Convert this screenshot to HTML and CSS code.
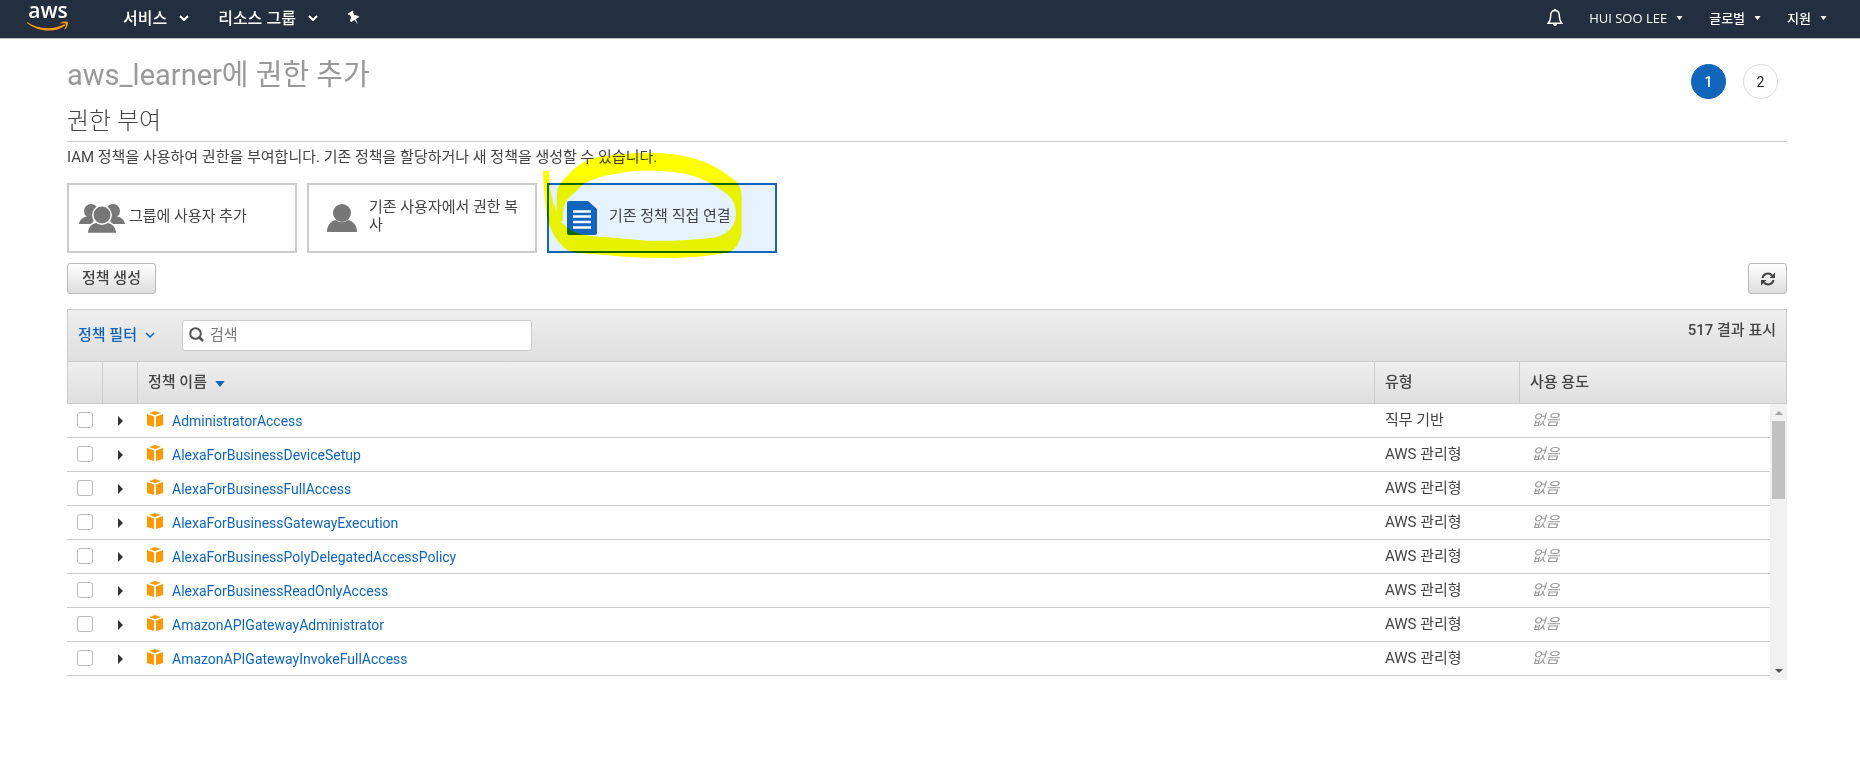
FILE: index.html
```html
<!DOCTYPE html>
<html lang="ko">
<head>
    <meta charset="UTF-8">
    <meta name="viewport" content="width=device-width, initial-scale=1.0">
    <title>IAM Management Console</title>
    <link rel="stylesheet" href="styles.css">
</head>
<body>

<!-- Shared icons -->
<svg class="sprite" aria-hidden="true">
    <symbol id="icon-chevron" viewBox="0 0 10 6">
        <path d="M1 1 L5 5 L9 1" fill="none" stroke="currentColor" stroke-width="2"/>
    </symbol>
    <symbol id="icon-caret" viewBox="0 0 8 5">
        <path d="M0 0 H8 L4 5 Z" fill="currentColor"/>
    </symbol>
    <symbol id="icon-expand" viewBox="0 0 5 10">
        <path d="M0 0 L5 5 L0 10 Z" fill="currentColor"/>
    </symbol>
    <symbol id="icon-policy" viewBox="0 0 16 16">
        <path d="M8 0 L14 2 L8 4 L2 2 Z M0 3 L7 5.4 V16 L0 14 Z M16 3 L9 5.4 V16 L16 14 Z" fill="#f90"/>
    </symbol>
</svg>

<nav class="navbar">
    <a href="#" class="logo" aria-label="AWS">
        <svg width="42" height="38" viewBox="0 0 42 38">
            <text x="21" y="18" text-anchor="middle" class="logo-text">aws</text>
            <path d="M0 22 C11 29.500 26 30 37 24.500 C38 24 38.800 25 37.800 25.700 C28 33 11 32 0 23 Z" fill="#f90"/>
            <path d="M33.500 23 C36 21.200 40 21.400 40.800 22.200 C41.400 23.500 40.300 27.500 38 29.500 C37.500 29.700 37.400 29.300 37.600 28.900 C38.300 27.300 39.300 24.700 38.800 23.900 C38 23.100 35.500 23.300 33.900 23.600 C33.300 23.600 33.200 23.200 33.500 23 Z" fill="#f90"/>
        </svg>
    </a>
    <div class="nav-left">
        <button type="button">서비스 <svg width="10" height="6"><use href="#icon-chevron"/></svg></button>
        <button type="button">리소스 그룹 <svg width="10" height="6"><use href="#icon-chevron"/></svg></button>
        <button type="button" aria-label="고정">
            <svg width="14" height="16" viewBox="0 0 14 16">
                <path transform="rotate(-32 7 8)" d="M4 1 H10 V2.500 H9 V6 Q12 7.200 12 10 H7.800 L7 15.500 L6.200 10 H2 Q2 7.200 5 6 V2.500 H4 Z" fill="#fff"/>
            </svg>
        </button>
    </div>
    <div class="nav-right">
        <button type="button" class="bell" aria-label="알림">
            <svg width="16" height="18" viewBox="0 0 16 18">
                <path d="M8 1.500 C5 1.500 3.700 4 3.700 6.500 C3.700 11 2.500 12.800 1 14.300 H15 C13.500 12.800 12.300 11 12.300 6.500 C12.300 4 11 1.500 8 1.500 Z" fill="none" stroke="#fff" stroke-width="1.400"/>
                <path d="M7 0 H9 V2 H7 Z M6 15 H10 C10 17.600 6 17.600 6 15 Z" fill="#fff"/>
            </svg>
        </button>
        <button type="button">HUI SOO LEE <svg width="7" height="4" viewBox="0 0 8 5"><use href="#icon-caret"/></svg></button>
        <button type="button">글로벌 <svg width="7" height="4" viewBox="0 0 8 5"><use href="#icon-caret"/></svg></button>
        <button type="button">지원 <svg width="7" height="4" viewBox="0 0 8 5"><use href="#icon-caret"/></svg></button>
    </div>
</nav>

<main class="content">
    <header class="page-header">
        <h1>aws_learner에 권한 추가</h1>
        <ol class="steps">
            <li class="active">1</li>
            <li>2</li>
        </ol>
    </header>

    <h2>권한 부여</h2>
    <p class="description">IAM 정책을 사용하여 권한을 부여합니다. 기존 정책을 할당하거나 새 정책을 생성할 수 있습니다.</p>

    <div class="cards">
        <button type="button" class="card">
            <span class="card-icon">
                <svg width="46" height="30" viewBox="0 0 46 30">
                    <g fill="#777">
                        <circle cx="12" cy="8" r="7"/>
                        <circle cx="34" cy="8" r="7"/>
                        <path d="M0 21 C0.500 17 4 14 8 13.500 H15 L14 21 Z M46 21 C45.500 17 42 14 38 13.500 H31 L32 21 Z"/>
                    </g>
                    <g fill="#777" stroke="#fff" stroke-width="1.500">
                        <path d="M8 30.500 C8.500 24 12.500 20 17.500 19 H28.500 C33.500 20 37.500 24 38 30.500 Z"/>
                        <circle cx="23" cy="12" r="9.200"/>
                    </g>
                </svg>
            </span>
            <span class="card-text">그룹에 사용자 추가</span>
        </button>
        <button type="button" class="card">
            <span class="card-icon">
                <svg width="30" height="28" viewBox="0 0 30 28">
                    <g fill="#777">
                        <path d="M0 28 C0 21 4 17 9 16 C12.500 19 17.500 19 21 16 C26 17 30 21 30 28 Z"/>
                        <circle cx="15" cy="9" r="9"/>
                    </g>
                </svg>
            </span>
            <span class="card-text">기존 사용자에서 권한 복사</span>
        </button>
        <button type="button" class="card selected" aria-pressed="true">
            <span class="card-icon">
                <svg width="30" height="34" viewBox="0 0 30 34">
                    <path d="M2 0 H21 L30 8 V32 Q30 34 28 34 H2 Q0 34 0 32 V2 Q0 0 2 0 Z" fill="#1166bb"/>
                    <path d="M6 10.500 H24 M6 15.500 H24 M6 21 H24 M6 26.500 H24" stroke="#fff" stroke-width="2.500"/>
                </svg>
            </span>
            <span class="card-text">기존 정책 직접 연결</span>
            <svg class="marker" width="206" height="110" viewBox="300 60 618 330" aria-hidden="true">
                <path fill="#ff0" fill-rule="evenodd" d="M309 123 H327 Q328 200 350 246 Q350 200 352 178 Q364 152 385 134 Q420 95 470 82 Q540 68 640 68 Q700 69 760 85 Q820 102 870 140 Q905 160 905 200 V310 Q898 350 870 366 Q800 382 700 384 Q560 384 470 373 Q410 370 385 362 Q350 340 330 290 Q312 235 309 123 Z M360 273 Q372 283 385 295 Q400 312 460 319 Q540 324 620 332 Q730 334 820 323 Q862 315 880 285 Q888 265 888 250 Q886 215 865 196 Q790 134 700 126 Q600 114 520 133 Q460 143 430 163 L383 207 Q366 228 369 276 Z"/>
            </svg>
        </button>
    </div>

    <div class="actions">
        <button type="button" class="btn">정책 생성</button>
        <button type="button" class="btn btn-icon" aria-label="새로 고침">
            <svg width="14" height="14" viewBox="0 0 14 14">
                <path d="M1.500 6 C2.200 1.500 8 0 11 3.500 M12.500 8 C11.800 12.500 6 14 3 10.500" fill="none" stroke="#444" stroke-width="2"/>
                <path d="M14 0.500 V6 H8.500 Z M0 13.500 V8 H5.500 Z" fill="#444"/>
            </svg>
        </button>
    </div>

    <section class="policies">
        <div class="toolbar">
            <button type="button" class="filter">정책 필터 <svg width="10" height="6" viewBox="0 0 10 6"><path d="M1 1 L5 5 L9 1" fill="none" stroke="currentColor" stroke-width="1.500"/></svg></button>
            <label class="search">
                <svg width="15" height="15" viewBox="0 0 15 15">
                    <path d="M10 10 L14 14" stroke="#555" stroke-width="2.500"/>
                    <circle cx="6.500" cy="6.500" r="5.300" fill="none" stroke="#555" stroke-width="2"/>
                </svg>
                <input type="text" placeholder="검색" aria-label="검색">
            </label>
            <span class="count">517 결과 표시</span>
        </div>

        <table class="table-head">
            <thead>
                <tr>
                    <th class="col-check"></th>
                    <th class="col-expand"></th>
                    <th>정책 이름 <svg width="10" height="6" viewBox="0 0 8 5"><use href="#icon-caret"/></svg></th>
                    <th class="col-type">유형</th>
                    <th class="col-usage">사용 용도</th>
                </tr>
            </thead>
        </table>

        <div class="table-scroll">
            <table class="table-body">
                <tbody>
                    <tr>
                        <td class="col-check"><input type="checkbox" aria-label="AdministratorAccess"></td>
                        <td class="col-expand"><svg width="5" height="10"><use href="#icon-expand"/></svg></td>
                        <td class="name"><svg width="16" height="16"><use href="#icon-policy"/></svg><a href="#">AdministratorAccess</a></td>
                        <td class="col-type">직무 기반</td>
                        <td class="col-usage">없음</td>
                    </tr>
                    <tr>
                        <td class="col-check"><input type="checkbox" aria-label="AlexaForBusinessDeviceSetup"></td>
                        <td class="col-expand"><svg width="5" height="10"><use href="#icon-expand"/></svg></td>
                        <td class="name"><svg width="16" height="16"><use href="#icon-policy"/></svg><a href="#">AlexaForBusinessDeviceSetup</a></td>
                        <td class="col-type">AWS 관리형</td>
                        <td class="col-usage">없음</td>
                    </tr>
                    <tr>
                        <td class="col-check"><input type="checkbox" aria-label="AlexaForBusinessFullAccess"></td>
                        <td class="col-expand"><svg width="5" height="10"><use href="#icon-expand"/></svg></td>
                        <td class="name"><svg width="16" height="16"><use href="#icon-policy"/></svg><a href="#">AlexaForBusinessFullAccess</a></td>
                        <td class="col-type">AWS 관리형</td>
                        <td class="col-usage">없음</td>
                    </tr>
                    <tr>
                        <td class="col-check"><input type="checkbox" aria-label="AlexaForBusinessGatewayExecution"></td>
                        <td class="col-expand"><svg width="5" height="10"><use href="#icon-expand"/></svg></td>
                        <td class="name"><svg width="16" height="16"><use href="#icon-policy"/></svg><a href="#">AlexaForBusinessGatewayExecution</a></td>
                        <td class="col-type">AWS 관리형</td>
                        <td class="col-usage">없음</td>
                    </tr>
                    <tr>
                        <td class="col-check"><input type="checkbox" aria-label="AlexaForBusinessPolyDelegatedAccessPolicy"></td>
                        <td class="col-expand"><svg width="5" height="10"><use href="#icon-expand"/></svg></td>
                        <td class="name"><svg width="16" height="16"><use href="#icon-policy"/></svg><a href="#">AlexaForBusinessPolyDelegatedAccessPolicy</a></td>
                        <td class="col-type">AWS 관리형</td>
                        <td class="col-usage">없음</td>
                    </tr>
                    <tr>
                        <td class="col-check"><input type="checkbox" aria-label="AlexaForBusinessReadOnlyAccess"></td>
                        <td class="col-expand"><svg width="5" height="10"><use href="#icon-expand"/></svg></td>
                        <td class="name"><svg width="16" height="16"><use href="#icon-policy"/></svg><a href="#">AlexaForBusinessReadOnlyAccess</a></td>
                        <td class="col-type">AWS 관리형</td>
                        <td class="col-usage">없음</td>
                    </tr>
                    <tr>
                        <td class="col-check"><input type="checkbox" aria-label="AmazonAPIGatewayAdministrator"></td>
                        <td class="col-expand"><svg width="5" height="10"><use href="#icon-expand"/></svg></td>
                        <td class="name"><svg width="16" height="16"><use href="#icon-policy"/></svg><a href="#">AmazonAPIGatewayAdministrator</a></td>
                        <td class="col-type">AWS 관리형</td>
                        <td class="col-usage">없음</td>
                    </tr>
                    <tr>
                        <td class="col-check"><input type="checkbox" aria-label="AmazonAPIGatewayInvokeFullAccess"></td>
                        <td class="col-expand"><svg width="5" height="10"><use href="#icon-expand"/></svg></td>
                        <td class="name"><svg width="16" height="16"><use href="#icon-policy"/></svg><a href="#">AmazonAPIGatewayInvokeFullAccess</a></td>
                        <td class="col-type">AWS 관리형</td>
                        <td class="col-usage">없음</td>
                    </tr>
                </tbody>
            </table>
            <div class="scrollbar" aria-hidden="true">
                <svg class="arrow-up" width="8" height="4" viewBox="0 0 8 4"><path d="M0 4 L4 0 L8 4 Z" fill="#a3a3a3"/></svg>
                <div class="thumb"></div>
                <svg class="arrow-down" width="8" height="4" viewBox="0 0 8 4"><path d="M0 0 L4 4 L8 0 Z" fill="#505050"/></svg>
            </div>
        </div>
    </section>
</main>

</body>
</html>
```
FILE: styles.css
```css
* {
    box-sizing: border-box;
}
body {
    margin: 0;
    font-family: Roboto, "Noto Sans CJK KR", sans-serif;
    font-size: 15px;
    line-height: 18px;
    color: #444;
    background: #fff;
}
button {
    font: inherit;
    color: inherit;
    cursor: pointer;
}
a {
    color: #1166bb;
    text-decoration: none;
}
a:hover {
    text-decoration: underline;
}
.sprite {
    display: none;
}

/* Navigation */
.navbar {
    display: flex;
    align-items: center;
    height: 39px;
    padding: 0 33px 0 27px;
    background: #232f3e;
    border-bottom: 1px solid #bbb;
    color: #fff;
    font-family: "Open Sans", "Noto Sans CJK KR", sans-serif;
}
.navbar button {
    display: flex;
    align-items: center;
    padding: 0;
    border: none;
    background: none;
    white-space: nowrap;
}
.logo {
    display: flex;
    margin-right: 54px;
}
.logo svg {
    overflow: visible;
}
.logo-text {
    font-family: "Open Sans", sans-serif;
    font-size: 21px;
    font-weight: 600;
    fill: #fff;
}
.nav-left {
    display: flex;
    align-items: center;
    gap: 29px;
    padding-bottom: 3px;
    font-size: 16px;
    font-weight: 500;
}
.nav-left button {
    gap: 12px;
}
.nav-right {
    display: flex;
    align-items: center;
    gap: 26px;
    margin-left: auto;
    padding-bottom: 2px;
    font-size: 13px;
    font-weight: 500;
}
.nav-right button {
    gap: 9px;
}

/* Page */
.content {
    padding: 14px 73px 40px 67px;
}
.page-header {
    display: flex;
    justify-content: space-between;
    padding-right: 9px;
}
h1 {
    margin: 0;
    padding-top: 2px;
    font-size: 29px;
    line-height: 40px;
    font-weight: 400;
    color: #999;
}
.steps {
    display: flex;
    gap: 17px;
    margin: 11px 0 0;
    padding: 0;
    list-style: none;
}
.steps li {
    width: 35px;
    height: 35px;
    border: 1px solid #ddd;
    border-radius: 50%;
    font-size: 14px;
    line-height: 34px;
    text-align: center;
    color: #222;
}
.steps .active {
    background: #1166bb;
    border-color: #1166bb;
    color: #fff;
    font-weight: 500;
}
h2 {
    margin: 0;
    padding: 4px 0 2px;
    border-bottom: 1px solid #ccc;
    font-size: 24px;
    line-height: 36px;
    font-weight: 300;
}
.page-header {
    height: 46px;
}
.description {
    margin: 6px 0 17px;
}

/* Permission options */
.cards {
    display: flex;
    gap: 10px;
}
.cards .card {
    position: relative;
    display: flex;
    align-items: center;
    gap: 4px;
    width: 230px;
    height: 70px;
    padding: 0 10px;
    border: 2px solid #ccc;
    background: #fff;
    text-align: left;
}
.cards .selected {
    border-color: #1166bb;
    background: #e6f2ff;
}
.card-icon {
    display: flex;
    flex: none;
    justify-content: center;
    width: 46px;
}
.card-text {
    padding-bottom: 4px;
}
.marker {
    position: absolute;
    top: -35px;
    left: -9px;
    mix-blend-mode: multiply;
    pointer-events: none;
}

.actions {
    display: flex;
    justify-content: space-between;
    margin: 10px 0 15px;
}
.btn {
    height: 31px;
    padding: 0 14px 2px;
    border: 1px solid #bbb;
    border-radius: 3px;
    background: linear-gradient(#fff, #ddd);
    font-weight: 500;
}
.btn-icon {
    display: flex;
    align-items: center;
    justify-content: center;
    width: 39px;
    padding: 0;
}

/* Policy table */
.toolbar {
    display: flex;
    align-items: center;
    height: 53px;
    padding: 0 10px;
    border: 1px solid #ccc;
    background: linear-gradient(#eee, #dfdfdf);
}
.filter {
    display: flex;
    align-items: center;
    gap: 8px;
    padding: 0 0 2px;
    border: none;
    background: none;
    color: #1166bb;
    font-weight: 500;
}
.search {
    display: flex;
    align-items: center;
    gap: 6px;
    width: 350px;
    height: 31px;
    margin-left: 27px;
    padding: 0 6px 2px;
    border: 1px solid #ccc;
    border-radius: 3px;
    background: #fff;
}
.search input {
    flex: 1;
    padding: 0;
    border: none;
    outline: none;
    background: none;
    font: inherit;
}
.search input::placeholder {
    color: #777;
}
.count {
    align-self: flex-start;
    margin: 11px 0 0 auto;
    font-weight: 500;
}
table {
    width: 100%;
    border-collapse: separate;
    border-spacing: 0;
    table-layout: fixed;
}
.table-head {
    border: 1px solid #ccc;
    border-top: none;
    background: linear-gradient(#eee, #dfdfdf);
}
th {
    height: 41px;
    padding: 0 10px 2px;
    border-right: 1px solid #ccc;
    text-align: left;
    font-weight: 500;
}
th:last-child {
    border-right: none;
}
th svg {
    margin-left: 4px;
    color: #1166bb;
}
.col-check {
    width: 35px;
}
.col-expand {
    width: 35px;
}
.col-type {
    width: 145px;
}
.col-usage {
    width: 266px;
}
.table-scroll {
    display: flex;
}
.table-body {
    flex: 1;
    align-self: flex-start;
}
td {
    height: 34px;
    padding: 0 10px 2px;
    border-bottom: 1px solid #ccc;
}
td.col-check {
    width: 36px;
}
td.col-expand {
    padding: 0 15px;
    color: #333;
}
td.col-usage {
    width: 250px;
    padding-left: 12px;
    font-style: italic;
    color: #999;
}
td.name {
    padding: 0 9px;
    font-size: 14px;
}
td svg {
    display: block;
}
td input {
    appearance: none;
    display: block;
    width: 16px;
    height: 16px;
    margin: 0;
    border: 1px solid #bbb;
    border-radius: 3px;
    background: #fff;
}
td input:checked {
    background: #1166bb;
}
.name svg {
    float: left;
    margin: -1px 9px 0 0;
}
.scrollbar {
    display: flex;
    flex-direction: column;
    align-items: center;
    width: 17px;
    height: 276px;
    padding: 7px 0;
    background: #f1f1f1;
}
.thumb {
    width: 13px;
    height: 78px;
    margin-top: 6px;
    background: #c1c1c1;
}
.arrow-down {
    margin-top: auto;
}
```
